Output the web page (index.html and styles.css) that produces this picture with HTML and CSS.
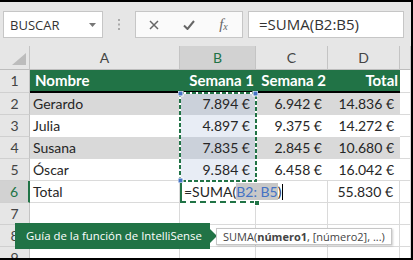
FILE: index.html
```html
<!DOCTYPE html>
<html lang="es">
<head>
    <meta charset="UTF-8">
    <title>SUMA - Excel</title>
    <link rel="stylesheet" href="styles.css">
</head>
<body>
    <div class="window">
        <div class="formula-bar">
            <div class="name-box">
                <span>BUSCAR</span>
                <svg width="7" height="4" viewBox="0 0 7 4"><path d="M0 0h7L3.5 4z" fill="#777"/></svg>
            </div>
            <div class="grip">
                <svg width="2" height="11" viewBox="0 0 2 11"><rect y="0" width="2" height="2" fill="#aaa"/><rect y="4.5" width="2" height="2" fill="#aaa"/><rect y="9" width="2" height="2" fill="#aaa"/></svg>
            </div>
            <div class="fx-box">
                <span class="fx-slot">
                    <svg width="10" height="10" viewBox="0 0 10 10"><path d="M1 1l8 8M9 1l-8 8" stroke="#666" stroke-width="1.5" fill="none"/></svg>
                </span>
                <span class="fx-slot">
                    <svg width="12" height="10" viewBox="0 0 12 10"><path d="M1 5.5l3.5 3.5L11 1" stroke="#666" stroke-width="2" fill="none"/></svg>
                </span>
                <span class="fx-slot fx"><i>f</i><span class="fx-x">x</span></span>
            </div>
            <div class="formula-input">=SUMA(B2:B5)</div>
        </div>

        <div class="sheet">
            <!-- column headers -->
            <div class="corner"><span class="corner-tri"></span></div>
            <div class="col-head">A</div>
            <div class="col-head active">B</div>
            <div class="col-head">C</div>
            <div class="col-head">D</div>
            <div class="col-head"></div>

            <!-- 1 -->
            <div class="row-head">1</div>
            <div class="th">Nombre</div>
            <div class="th num">Semana 1</div>
            <div class="th num">Semana 2</div>
            <div class="th num">Total</div>
            <div class="cell"></div>

            <!-- 2 -->
            <div class="row-head">2</div>
            <div class="td band">Gerardo</div>
            <div class="td band sel num">7.894 €</div>
            <div class="td band num">6.942 €</div>
            <div class="td band num">14.836 €</div>
            <div class="cell"></div>

            <!-- 3 -->
            <div class="row-head">3</div>
            <div class="td">Julia</div>
            <div class="td sel num">4.897 €</div>
            <div class="td num">9.375 €</div>
            <div class="td num">14.272 €</div>
            <div class="cell"></div>

            <!-- 4 -->
            <div class="row-head">4</div>
            <div class="td band">Susana</div>
            <div class="td band sel num">7.835 €</div>
            <div class="td band num">2.845 €</div>
            <div class="td band num">10.680 €</div>
            <div class="cell"></div>

            <!-- 5 -->
            <div class="row-head">5</div>
            <div class="td last">Óscar</div>
            <div class="td last sel num">9.584 €</div>
            <div class="td last num">6.458 €</div>
            <div class="td last num">16.042 €</div>
            <div class="cell"></div>

            <!-- 6 -->
            <div class="row-head active">6</div>
            <div class="cell">Total</div>
            <div class="cell edit">=SUMA(<span class="ref">B2: B5</span>)<span class="caret"></span></div>
            <div class="cell"></div>
            <div class="cell num">55.830 €</div>
            <div class="cell"></div>

            <!-- 7 -->
            <div class="row-head">7</div>
            <div class="cell"></div>
            <div class="cell"></div>
            <div class="cell"></div>
            <div class="cell"></div>
            <div class="cell"></div>

            <!-- 8 -->
            <div class="row-head">8</div>
            <div class="cell"></div>
            <div class="cell"></div>
            <div class="cell"></div>
            <div class="cell"></div>
            <div class="cell"></div>

            <!-- 9 -->
            <div class="row-head">9</div>
            <div class="cell"></div>
            <div class="cell"></div>
            <div class="cell"></div>
            <div class="cell"></div>
            <div class="cell"></div>

            <!-- marching ants round B2:B5 -->
            <svg class="range" width="80" height="92" viewBox="0 0 80 92">
                <rect x="2" y="2" width="76" height="88" fill="none" stroke="#fff" stroke-width="2"/>
                <rect x="2" y="2" width="76" height="88" fill="none" stroke="#217346" stroke-width="2" stroke-dasharray="4 2"/>
                <rect x="0" y="0" width="5" height="5" fill="#4472c4" stroke="#fff" stroke-width="1"/>
                <rect x="75" y="0" width="5" height="5" fill="#4472c4" stroke="#fff" stroke-width="1"/>
                <rect x="0" y="87" width="5" height="5" fill="#4472c4" stroke="#fff" stroke-width="1"/>
            </svg>
            <span class="fill-handle"></span>

            <div class="callout">Guía de la función de IntelliSense</div>
            <div class="hint">SUMA(<b>número1</b>, [número2], ...)</div>
        </div>
    </div>
</body>
</html>
```

FILE: styles.css
```css
* {
    margin: 0;
    padding: 0;
    box-sizing: border-box;
}

body {
    width: 413px;
    height: 260px;
    overflow: hidden;
    background-color: #fff;
    font-family: Lato, "Noto Sans", sans-serif;
    color: #262626;
}

.window {
    width: 413px;
    height: 260px;
    border-top: 2px solid #000;
    border-right: 2px solid #000;
    border-bottom: 2px solid #000;
    overflow: hidden;
}

/* formula bar */

.formula-bar {
    height: 44px;
    background-color: #e6e6e6;
    display: flex;
    align-items: flex-start;
    padding: 9px 0 0 3px;
    font-family: "Open Sans", sans-serif;
}

.name-box {
    width: 100px;
    height: 27px;
    background-color: #fff;
    border: 1px solid #c6c6c6;
    display: flex;
    align-items: center;
    justify-content: space-between;
    padding: 0 6px 0 6px;
    font-size: 13px;
    color: #333;
}

.grip {
    width: 32px;
    height: 27px;
    display: flex;
    align-items: center;
    justify-content: center;
}

.fx-box {
    width: 108px;
    height: 27px;
    background-color: #fafafa;
    border: 1px solid #c6c6c6;
    display: flex;
    align-items: center;
}

.fx-slot {
    width: 35px;
    display: flex;
    justify-content: center;
    align-items: center;
}

.fx {
    font-family: "Liberation Serif", serif;
    color: #666;
    font-size: 15px;
}

.fx-x {
    font-size: 10px;
    font-style: italic;
    margin-top: 4px;
}

.formula-input {
    width: 156px;
    height: 27px;
    margin-left: 5px;
    background-color: #fff;
    border: 1px solid #c6c6c6;
    padding-left: 10px;
    font-size: 15px;
    line-height: 25px;
    color: #333;
}

/* grid */

.sheet {
    position: relative;
    display: grid;
    grid-template-columns: 30px 150px 76px 72px 72px 11px;
    grid-template-rows: 24px 23px repeat(8, 22px);
    font-size: 14px;
    line-height: 22px;
}

.sheet > div {
    white-space: nowrap;
}

.corner {
    background-color: #e6e6e6;
    border-right: 1px solid #c4c4c4;
    border-bottom: 1px solid #bdbdbd;
    display: flex;
    align-items: flex-end;
    justify-content: flex-end;
    padding: 0 3px 4px 0;
}

.corner-tri {
    width: 0;
    height: 0;
    border-left: 14px solid transparent;
    border-bottom: 12px solid #bcbcbc;
}

.col-head {
    background-color: #e6e6e6;
    border-right: 1px solid #c4c4c4;
    border-bottom: 1px solid #bdbdbd;
    text-align: center;
    line-height: 24px;
    color: #444;
}

.col-head.active {
    background-color: #d2d2d2;
    color: #217346;
}

.row-head {
    background-color: #e6e6e6;
    border-right: 1px solid #c4c4c4;
    border-bottom: 1px solid #d0d0d0;
    text-align: center;
    color: #444;
}

.row-head.active {
    background-color: #d2d2d2;
    border-right: 2px solid #217346;
    color: #217346;
}

.cell {
    border-right: 1px solid #dadada;
    border-bottom: 1px solid #dadada;
    padding: 0 3px;
}

.th {
    background-color: #217346;
    color: #fff;
    font-weight: bold;
    font-size: 15px;
    line-height: 21px;
    border-bottom: 2px solid #000;
    padding: 0 3px 0 5px;
}

.td {
    padding: 0 3px;
}

.td.band {
    background-color: #d9d9d9;
}

.td.last {
    border-bottom: 1px solid #dadada;
}

.td.num,
.cell.num {
    text-align: right;
    padding-right: 6px;
}

.th.num {
    text-align: right;
    padding-right: 2px;
    padding-left: 0;
}

.td.sel {
    background-color: #e8edf5;
}

.td.band.sel {
    background-color: #cbd1da;
}

.edit {
    position: relative;
    z-index: 1;
    border-right: none;
    border-left: 2px solid #217346;
    border-bottom: 2px dashed #217346;
    padding-left: 2px;
    overflow: visible;
}

.ref {
    color: #4472c4;
    background-color: #c8c8c8;
}

.caret {
    display: inline-block;
    width: 1px;
    height: 16px;
    background-color: #000;
    vertical-align: -3px;
    margin-left: 1px;
}

/* overlays */

.range {
    position: absolute;
    left: 178px;
    top: 45px;
    z-index: 2;
}

.fill-handle {
    position: absolute;
    left: 254px;
    top: 154px;
    width: 6px;
    height: 6px;
    background-color: #217346;
    border: 1px solid #fff;
    z-index: 2;
}

.callout {
    position: absolute;
    left: 15px;
    top: 177px;
    width: 195px;
    height: 26px;
    background-color: #217346;
    color: #fff;
    font-family: "Open Sans", sans-serif;
    font-size: 11.4px;
    line-height: 26px;
    padding-left: 11px;
    z-index: 3;
}

.callout::after {
    content: "";
    position: absolute;
    right: -7px;
    top: 6px;
    border-top: 7px solid transparent;
    border-bottom: 7px solid transparent;
    border-left: 7px solid #217346;
}

.hint {
    position: absolute;
    left: 216px;
    top: 182px;
    height: 17px;
    background-color: #fff;
    border: 1px solid #c6c6c6;
    box-shadow: 1px 1px 2px rgba(0, 0, 0, 0.2);
    font-family: "Open Sans", sans-serif;
    font-size: 11px;
    line-height: 15px;
    color: #444;
    padding: 0 6px;
    z-index: 3;
}
```
